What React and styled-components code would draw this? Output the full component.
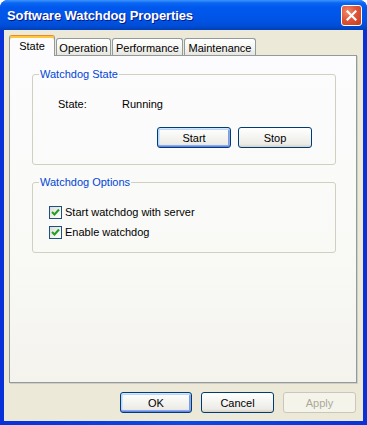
import React from 'react';
import styled, { createGlobalStyle, css } from 'styled-components';

const GlobalStyle = createGlobalStyle`
  html, body {
    margin: 0;
    padding: 0;
    background: #ffffff;
  }
  body {
    font-family: Tahoma, "Liberation Sans", "DejaVu Sans", sans-serif;
    font-size: 11px;
    color: #000;
  }
`;

// Outer XP Luna window frame
const Window = styled.div`
  width: 367px;
  height: 425px;
  display: flex;
  flex-direction: column;
  background: linear-gradient(90deg, #0831d9 0%, #0a4ae6 50%, #0831d9 100%);
  border-radius: 8px 8px 0 0;
  overflow: hidden;
`;

const TitleBar = styled.div`
  height: 30px;
  flex: none;
  display: flex;
  align-items: center;
  justify-content: space-between;
  padding: 0 5px 0 7px;
  box-sizing: border-box;
  background: linear-gradient(
    180deg,
    #3d95ff 0%,
    #0a66f0 10%,
    #0058ee 25%,
    #0055e8 60%,
    #004ed8 85%,
    #0040b8 100%
  );
`;

const Title = styled.span`
  font-family: "Liberation Sans", "DejaVu Sans", sans-serif;
  font-weight: bold;
  font-size: 13px;
  letter-spacing: -0.1px;
  color: #ffffff;
  text-shadow: 1px 1px 0 #0a1883;
  margin-top: 1px;
`;

const CloseButton = styled.div`
  width: 21px;
  height: 21px;
  box-sizing: border-box;
  border: 1px solid #ffffff;
  border-radius: 3px;
  background: radial-gradient(circle at 30% 30%, #f08a6a 0%, #e0553a 45%, #c33d1e 100%);
  display: flex;
  align-items: center;
  justify-content: center;
  margin-top: 1px;
`;

const Body = styled.div`
  flex: 1;
  margin: 0 4px 4px 4px;
  background: #ece9d8;
  display: flex;
  flex-direction: column;
  padding: 5px 6px 8px 5px;
  box-sizing: border-box;
`;

const TabStrip = styled.div`
  display: flex;
  align-items: flex-end;
  gap: 1px;
  height: 21px;
  margin-bottom: -1px;
  position: relative;
  z-index: 1;
`;

const Tab = styled.div`
  width: ${({ w }) => w}px;
  box-sizing: border-box;
  display: flex;
  align-items: center;
  justify-content: center;
  border: 1px solid #919b9c;
  border-bottom: none;
  border-radius: 3px 3px 0 0;
  font-family: Tahoma, "Liberation Sans", sans-serif;
  font-size: 11px;
  color: #000;
  ${({ active }) =>
    active
      ? css`
          height: 21px;
          background: #fcfcfe;
          border-top: 1px solid #e68b2c;
          box-shadow: inset 0 2px 0 #ffc83c;
          padding-top: 1px;
          padding-bottom: 2px;
        `
      : css`
          height: 17px;
          margin-bottom: 1px;
          background: linear-gradient(180deg, #ffffff 0%, #f4f4f0 60%, #e6e5de 100%);
          padding-top: 1px;
        `}
`;

const Panel = styled.div`
  flex: 1;
  border: 1px solid #919b9c;
  background: linear-gradient(180deg, #fcfcfe 0%, #f9f9f6 60%, #f4f3ee 100%);
  padding: 12px 20px 0 22px;
  display: flex;
  flex-direction: column;
  gap: 11px;
  box-shadow: 1px 1px 0 #d0cfc6;
`;

const Group = styled.fieldset`
  margin: 0;
  padding: 0 0 ${({ pb }) => pb}px 0;
  border: 1px solid #d0d0bf;
  border-radius: 3px;
  min-width: 0;
`;

const Legend = styled.legend`
  margin-left: 6px;
  padding: 0 1px;
  color: #0046d5;
  font-size: 11px;
  line-height: 13px;
`;

const StateRow = styled.div`
  display: flex;
  align-items: center;
  height: 13px;
  margin-top: 16px;
  padding-left: 25px;
`;

const StateLabel = styled.span`
  width: 64px;
`;

const ButtonRow = styled.div`
  display: flex;
  justify-content: flex-end;
  gap: ${({ gap }) => gap}px;
  margin-top: ${({ mt }) => mt}px;
  padding-right: ${({ pr }) => pr}px;
`;

const Button = styled.div`
  width: ${({ w }) => w}px;
  height: 21px;
  box-sizing: border-box;
  display: flex;
  align-items: center;
  justify-content: center;
  border-radius: 3px;
  font-size: 11px;
  ${({ disabled }) =>
    disabled
      ? css`
          border: 1px solid #c9c7ba;
          background: #f5f4ea;
          color: #aca899;
        `
      : css`
          border: 1px solid #003c74;
          background: linear-gradient(180deg, #ffffff 0%, #f6f6f3 40%, #ecebe6 85%, #d6d0c5 100%);
          color: #000;
        `}
  ${({ focused }) =>
    focused &&
    css`
      box-shadow: inset 0 1px 0 #cee7ff, inset 0 -1px 0 #6982ee, inset 1px 0 0 #bcd4f6,
        inset -1px 0 0 #89ade4, inset 0 2px 0 #bcd4f6, inset 0 -2px 0 #89ade4,
        inset 2px 0 0 #cee7ff, inset -2px 0 0 #7d99e8;
    `}
`;

const CheckList = styled.div`
  display: flex;
  flex-direction: column;
  margin-top: 13px;
  padding-left: 16px;
`;

const CheckRow = styled.label`
  display: flex;
  align-items: center;
  height: 20px;
`;

const Box = styled.span`
  width: 13px;
  height: 13px;
  box-sizing: border-box;
  border: 1px solid #1c5180;
  background: linear-gradient(135deg, #dcdcd7 0%, #f3f3f0 60%, #ffffff 100%);
  display: flex;
  align-items: center;
  justify-content: center;
  margin-right: 3px;
`;

const Footer = styled.div`
  display: flex;
  justify-content: flex-end;
  gap: 9px;
  margin-top: 9px;
  padding-right: 1px;
`;

const CheckMark = () => (
  <svg width="9" height="9" viewBox="0 0 9 9">
    <path d="M1 4 L3.5 6.5 L8 1.5" fill="none" stroke="#21a121" strokeWidth="2" />
  </svg>
);

const CloseX = () => (
  <svg width="11" height="11" viewBox="0 0 11 11">
    <path d="M1.5 1.5 L9.5 9.5 M9.5 1.5 L1.5 9.5" stroke="#fff" strokeWidth="2.2" strokeLinecap="square" />
  </svg>
);

const Checkbox = ({ label }) => (
  <CheckRow>
    <Box>
      <CheckMark />
    </Box>
    {label}
  </CheckRow>
);

const App = () => (
  <>
    <GlobalStyle />
    <Window>
      <TitleBar>
        <Title>Software Watchdog Properties</Title>
        <CloseButton>
          <CloseX />
        </CloseButton>
      </TitleBar>
      <Body>
        <TabStrip>
          <Tab w={46} active>State</Tab>
          <Tab w={55}>Operation</Tab>
          <Tab w={71}>Performance</Tab>
          <Tab w={72}>Maintenance</Tab>
        </TabStrip>
        <Panel>
          <Group pb={16}>
            <Legend>Watchdog State</Legend>
            <StateRow>
              <StateLabel>State:</StateLabel>
              Running
            </StateRow>
            <ButtonRow gap={7} mt={17} pr={23}>
              <Button w={74} focused>Start</Button>
              <Button w={74}>Stop</Button>
            </ButtonRow>
          </Group>
          <Group pb={10}>
            <Legend>Watchdog Options</Legend>
            <CheckList>
              <Checkbox label="Start watchdog with server" />
              <Checkbox label="Enable watchdog" />
            </CheckList>
          </Group>
        </Panel>
        <Footer>
          <Button w={72} focused>OK</Button>
          <Button w={73}>Cancel</Button>
          <Button w={73} disabled>Apply</Button>
        </Footer>
      </Body>
    </Window>
  </>
);

export default App;
